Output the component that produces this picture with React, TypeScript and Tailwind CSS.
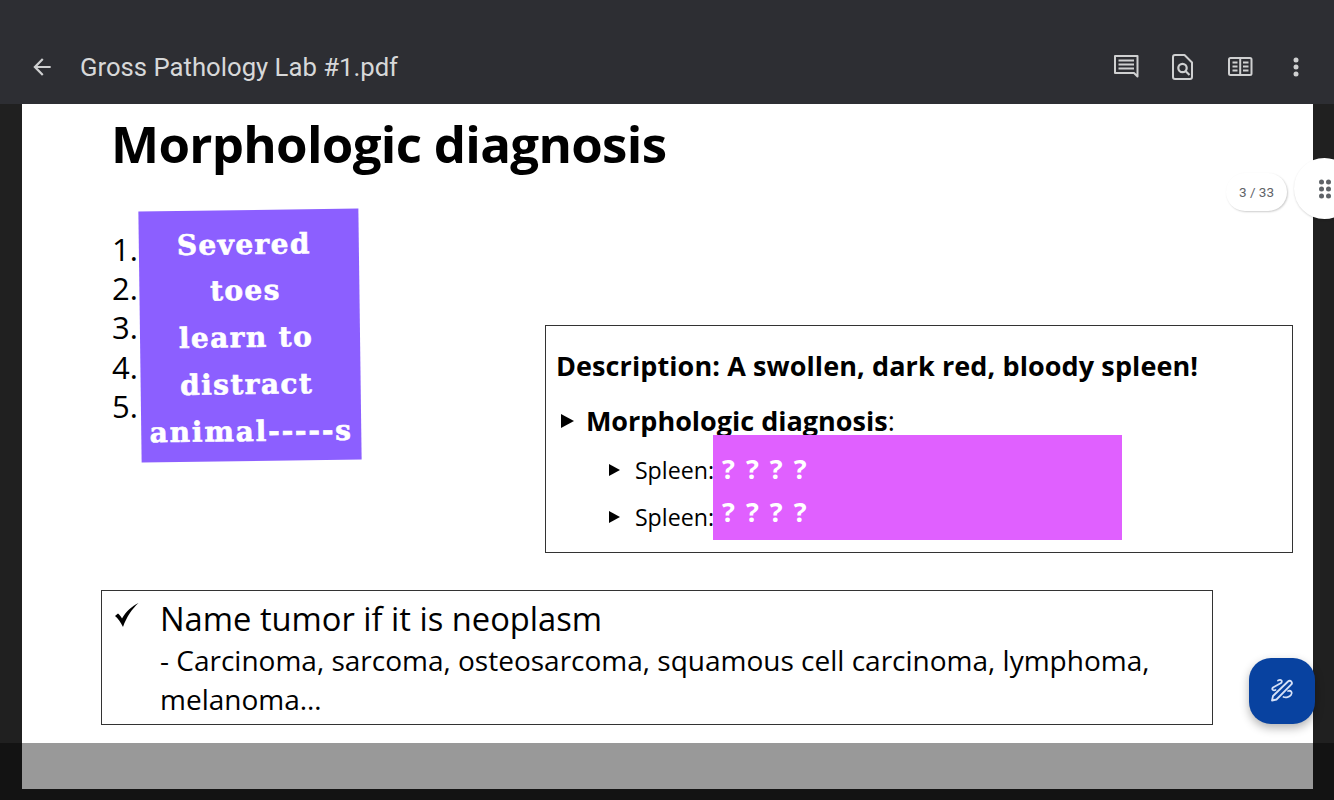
const slideFont = { fontFamily: "'Open Sans', sans-serif" };

function BackIcon() {
  return (
    <svg width="26" height="26" viewBox="0 0 24 24" fill="#cfd0d1">
      <path d="M20 11H7.83l5.59-5.59L12 4l-8 8 8 8 1.41-1.41L7.83 13H20v-2z" />
    </svg>
  );
}

function CommentIcon() {
  return (
    <svg width="28" height="28" viewBox="0 0 28 28" fill="none" stroke="#cfd0d1" strokeWidth="2">
      <path d="M3 3h22.5v20.5l-3.5-3.5H3z" strokeLinejoin="round" />
      <path d="M6.5 7.5h15.5M6.5 11.5h15.5M6.5 15.500h15.5" strokeWidth="2" />
    </svg>
  );
}

function FileSearchIcon() {
  return (
    <svg width="24" height="28" viewBox="0 0 24 28" fill="none" stroke="#cfd0d1" strokeWidth="2">
      <path d="M4 2h9.500L21 9.500V24a2 2 0 0 1-2 2H4a2 2 0 0 1-2-2V4a2 2 0 0 1 2-2z" strokeLinejoin="round" />
      <circle cx="11.500" cy="15" r="4.200" strokeWidth="2.200" />
      <path d="M14.500 18l4 4" strokeWidth="2.200" />
    </svg>
  );
}

function BookIcon() {
  return (
    <svg width="26" height="22" viewBox="0 0 26 22" fill="none" stroke="#cfd0d1" strokeWidth="2">
      <rect x="2" y="2" width="22.500" height="17" rx="1.500" />
      <path d="M13.200 2v17" />
      <path d="M5.500 6.500h5M5.500 10.500h5M5.500 14.500h5M16 6.500h5.500M16 10.500h5.500M16 14.500h5.500" />
    </svg>
  );
}

function DotsIcon() {
  return (
    <svg width="8" height="22" viewBox="0 0 8 22" fill="#cfd0d1">
      <circle cx="4" cy="4" r="2.500" />
      <circle cx="4" cy="11" r="2.500" />
      <circle cx="4" cy="18" r="2.500" />
    </svg>
  );
}

function GripIcon() {
  return (
    <svg width="14" height="20" viewBox="0 0 14 20" fill="#5f6368">
      <circle cx="3.500" cy="3" r="2.500" />
      <circle cx="10.500" cy="3" r="2.500" />
      <circle cx="3.500" cy="10" r="2.500" />
      <circle cx="10.500" cy="10" r="2.500" />
      <circle cx="3.500" cy="17" r="2.500" />
      <circle cx="10.500" cy="17" r="2.500" />
    </svg>
  );
}

function ScribbleIcon() {
  return (
    <svg width="26" height="26" viewBox="0 0 26 26" fill="none" stroke="#d5e0f7" strokeWidth="1.800" strokeLinecap="round" strokeLinejoin="round">
      <path d="M3 22.500l1-4.500L19 3.500c1-1 2.500-1 3.300 0s.8 2.300-.2 3.200L7.500 21.500z" />
      <path d="M9 2.500c3-1.500 5 .5 3 2.500L4 9.500c-2 2 .5 3.500 2.500 2.500" />
      <path d="M19 13c3-1 5 1.500 3 4-1.500 2-5 3-7.500 2" />
    </svg>
  );
}

function CheckMark() {
  return (
    <svg className="absolute left-[12px] top-[11px]" width="26" height="26" viewBox="0 0 26 26" fill="#000">
      <path d="M1 14l3-2.500c1.500 1 3 3 4 5C12 9.500 18 4 24.500 1 18 7 12.500 15 9 25 6.500 20 4 16.500 1 14z" />
    </svg>
  );
}

function Arrow() {
  return <span className="ml-[5px] mr-[12px] h-0 w-0 border-y-[7px] border-l-[13px] border-y-transparent border-l-black" />;
}

function SmallArrow() {
  return <span className="mr-[15px] h-0 w-0 border-y-[6px] border-l-[11px] border-y-transparent border-l-black" />;
}

export default function App() {
  return (
    <div className="relative h-[800px] w-[1334px] overflow-hidden bg-[#202020]">
      {/* toolbar */}
      <header className="flex h-[104px] items-center bg-[#2d2e33] pl-[29px] pr-[26px] pt-[30px]">
        <BackIcon />
        <h1 className="ml-[25px] font-['Roboto',sans-serif] text-[25.700px] font-normal leading-[36px] text-[#d7d8d9]">
          Gross Pathology Lab #1.pdf
        </h1>
        <div className="ml-auto mr-[8px] flex items-center">
          <CommentIcon />
          <span className="ml-[31px]"><FileSearchIcon /></span>
          <span className="ml-[32px]"><BookIcon /></span>
          <span className="ml-[39px]"><DotsIcon /></span>
        </div>
      </header>

      {/* pdf page */}
      <main className="relative ml-[22px] h-[685px] w-[1291px] bg-white text-black" style={slideFont}>
        <h2 className="pl-[89px] pt-[7px] text-[51px] font-bold leading-[64px] tracking-[-0.700px]">Morphologic diagnosis</h2>

        <div className="flex">
          <ol className="ml-[90px] mt-[55px] text-[31px] leading-[39.200px]">
            <li>1.</li>
            <li>2.</li>
            <li>3.</li>
            <li>4.</li>
            <li>5.</li>
          </ol>
          <section className="ml-[407px] mt-[150px] h-[228px] w-[748px] shrink-0 border-[1.500px] border-[#333] pl-[10px] pt-[22px]">
            <p className="text-[27px] font-bold leading-[36px] tracking-[0.1px]">Description: A swollen, dark red, bloody spleen!</p>
            <p className="mt-[19px] flex items-center text-[27px] leading-[36px]">
              <Arrow />
              <span><b>Morphologic diagnosis</b>:</span>
            </p>
            <p className="ml-[53px] mt-[13px] flex items-center text-[23.200px] leading-[36px]">
              <SmallArrow />
              Spleen:
            </p>
            <p className="ml-[53px] mt-[11px] flex items-center text-[23.200px] leading-[36px]">
              <SmallArrow />
              Spleen:
            </p>
          </section>
        </div>

        <section className="relative ml-[79px] mt-[37px] h-[135px] w-[1112px] border-[1.500px] border-[#333] pl-[58px] pt-[8px]">
          <CheckMark />
          <p className="text-[32.700px] leading-[40px]">Name tumor if it is neoplasm</p>
          <p className="mt-[2px] text-[28px] leading-[39px]">
            - Carcinoma, sarcoma, osteosarcoma, squamous cell carcinoma, lymphoma, melanoma…
          </p>
        </section>

        {/* sticker over the numbered list */}
        <div className="absolute left-[118px] top-[106px] flex h-[251px] w-[220px] rotate-[-0.750deg] flex-col items-center justify-center bg-[#8c5fff] pr-[8px] pt-[6px] font-['DejaVu_Serif',serif] text-[28px] font-bold leading-[46.700px] tracking-[1.400px] text-white [-webkit-text-stroke:0.6px_#fff]">
          <span className="pr-[2px]">Severed</span>
          <span>toes</span>
          <span>learn to</span>
          <span>distract</span>
          <span className="ml-[8px] whitespace-nowrap tracking-[1.800px]">animal-----s</span>
        </div>

        {/* answer cover */}
        <div className="absolute left-[691px] top-[331px] h-[105px] w-[409px] bg-[#e060ff] pl-[9px] pt-[12px] text-[27px] font-bold leading-[43px] tracking-[2px] text-white">
          <p>? ? ? ?</p>
          <p>? ? ? ?</p>
        </div>

        {/* page counter */}
        <div className="absolute left-[1204px] top-[69px] flex h-[38px] w-[61px] items-center justify-center rounded-full bg-white font-['Roboto',sans-serif] text-[13.500px] text-[#5f6368] shadow-[1px_1px_2px_rgba(0,0,0,0.2)]">
          3 / 33
        </div>
      </main>

      {/* bottom scrim */}
      <div className="absolute bottom-0 left-0 h-[57px] w-full bg-black/40" />

      <div className="absolute left-[1294px] top-[158px] flex h-[61px] w-[61px] items-center rounded-full bg-white pl-[24px] shadow-[0_1px_2px_rgba(0,0,0,0.15)]">
        <GripIcon />
      </div>

      <button className="absolute left-[1249px] top-[658px] flex h-[66px] w-[66px] items-center justify-center rounded-[22px] bg-[#0842a0] shadow-[0_4px_10px_rgba(0,0,0,0.3)]">
        <ScribbleIcon />
      </button>
    </div>
  );
}
